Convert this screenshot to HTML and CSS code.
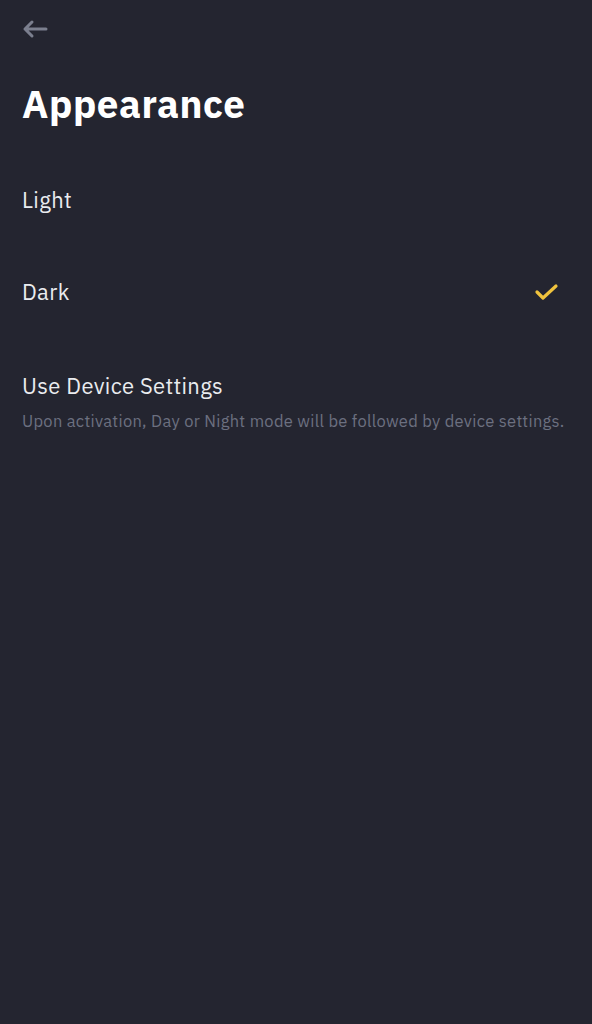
FILE: index.html
```html
<!DOCTYPE html>
<html lang="en">

<head>
    <meta charset="UTF-8">
    <meta name="viewport" content="width=device-width, initial-scale=1.0">
    <title>Appearance</title>
    <link rel="stylesheet" href="styles.css">
</head>

<body>
    <div class="topbar">
        <svg class="backIcon" width="26" height="20" viewBox="0 0 26 20">
            <path d="M24 10H3M10 3L3 10l7 7" fill="none" stroke="#7b7f8e" stroke-width="3" stroke-linecap="round" stroke-linejoin="round" />
        </svg>
    </div>

    <h1 class="title">Appearance</h1>

    <div class="options">
        <div class="option">
            <span class="optionName">Light</span>
        </div>
        <div class="option">
            <span class="optionName">Dark</span>
            <svg class="check" width="26" height="20" viewBox="0 0 26 20">
                <path d="M3 10l6 6L22 4" fill="none" stroke="#f0c33d" stroke-width="3.2" stroke-linecap="round" stroke-linejoin="round" />
            </svg>
        </div>
        <div class="option device">
            <span class="optionName">Use Device Settings</span>
            <p class="hint">Upon activation, Day or Night mode will be followed by device settings.</p>
        </div>
    </div>
</body>

</html>
```

FILE: styles.css
```css
body {
    font-family: "IBM Plex Sans", Inter, "Noto Sans", sans-serif;
    margin: 0;
    padding: 0 22px;
    background-color: #242530;
    color: #eaecef;
    height: 1024px;
    box-sizing: border-box;
}

.topbar {
    height: 60px;
    display: flex;
    align-items: flex-start;
    padding-top: 19px;
    box-sizing: border-box;
}

.backIcon {
    display: block;
}

.title {
    margin: 19px 0 0 0;
    font-size: 38.5px;
    letter-spacing: 0.55px;
    line-height: 50px;
    font-weight: 700;
    color: #ffffff;
}

.options {
    margin-top: 25px;
}

.option {
    display: flex;
    align-items: center;
    justify-content: space-between;
    flex-wrap: wrap;
    height: 92px;
}

.optionName {
    font-size: 22px;
    letter-spacing: 0.35px;
    line-height: 30px;
}

.check {
    display: block;
    margin-right: 10px;
}

.device {
    display: block;
    height: auto;
    padding-top: 33px;
}

.hint {
    margin: 9px 0 0 0;
    font-size: 16.5px;
    letter-spacing: 0.3px;
    line-height: 22px;
    color: #6c7080;
    white-space: nowrap;
}
```
